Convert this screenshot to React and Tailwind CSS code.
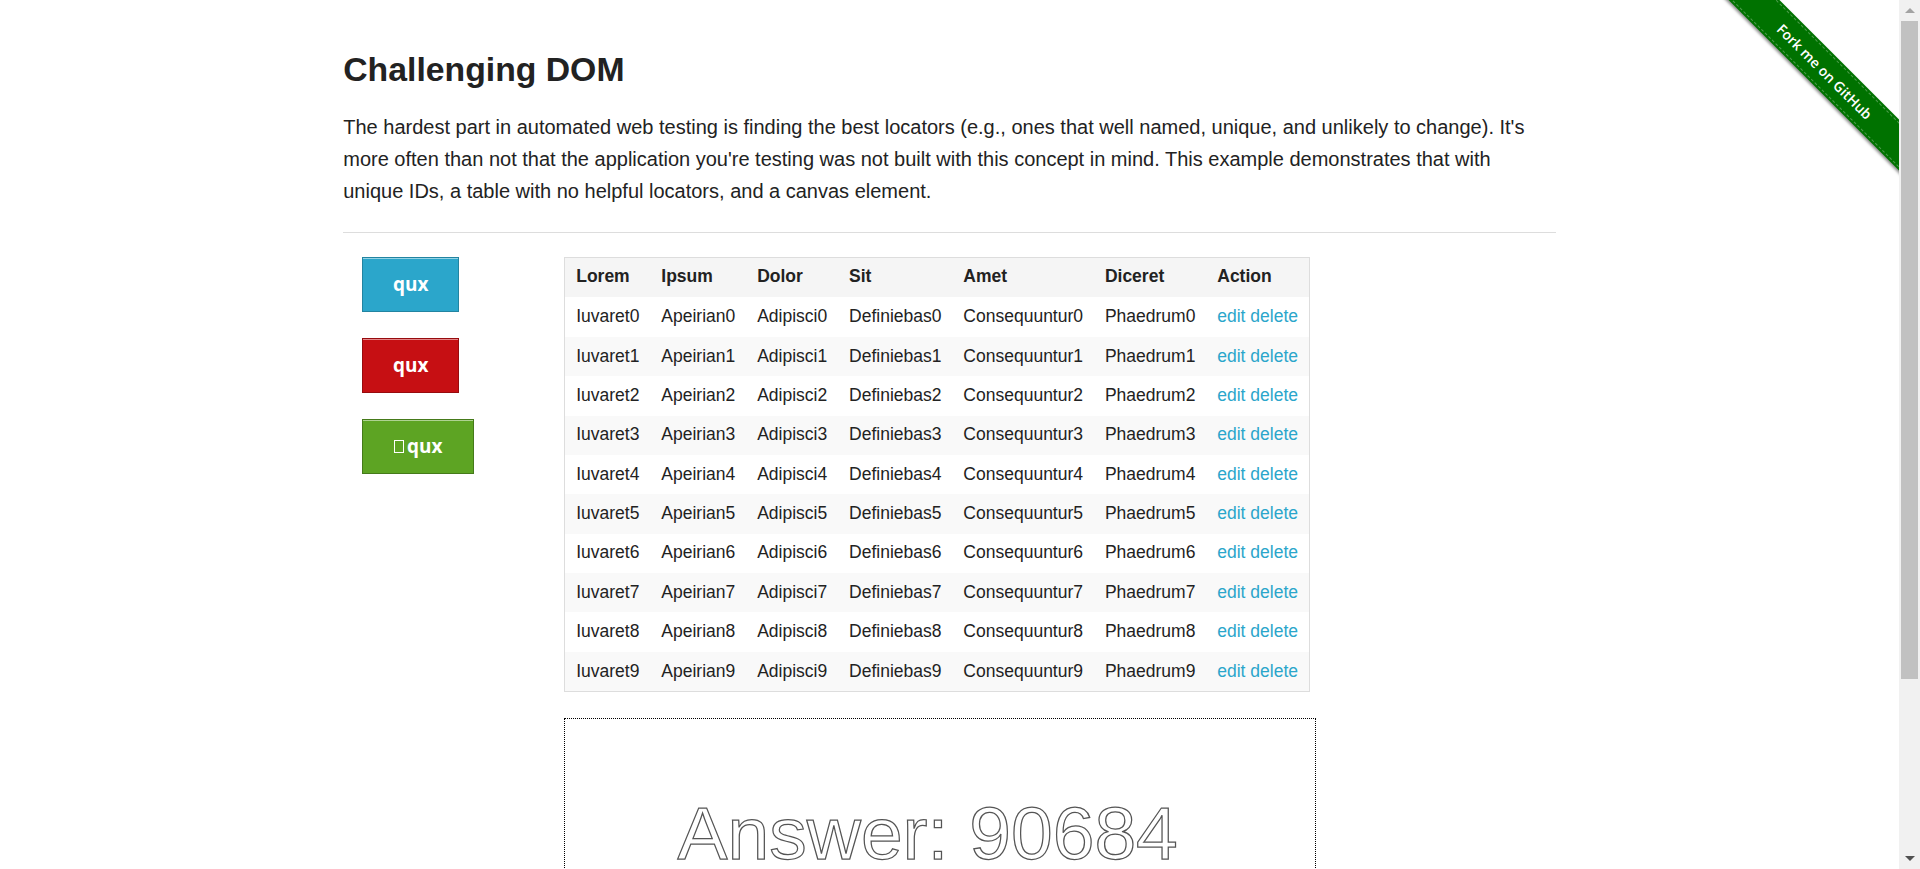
import React from 'react';

const headers = ['Lorem', 'Ipsum', 'Dolor', 'Sit', 'Amet', 'Diceret', 'Action'];
const rows = Array.from({ length: 10 }, (_, i) => [
  `Iuvaret${i}`,
  `Apeirian${i}`,
  `Adipisci${i}`,
  `Definiebas${i}`,
  `Consequuntur${i}`,
  `Phaedrum${i}`,
]);

const ForkRibbon = () => (
  <div className="absolute top-0 right-0 w-[186px] h-[186px] overflow-hidden pointer-events-none">
    <div className="absolute left-[-38px] top-[53px] w-[300px] h-[36px] rotate-45 bg-[#007200] shadow-[0_2px_3px_rgba(0,0,0,0.45)] flex items-center justify-center">
      <div className="absolute inset-x-0 top-[2px] border-t border-dashed border-white/30" />
      <div className="absolute inset-x-0 bottom-[2px] border-t border-dashed border-white/30" />
      <span className="font-['Open_Sans',sans-serif] font-semibold text-[14px] text-white">
        Fork me on GitHub
      </span>
    </div>
  </div>
);

const QuxButton = ({ color, wide, tofu }) => (
  <a
    href="#"
    className={`flex items-center justify-center h-[55px] border font-['Open_Sans',sans-serif] font-bold text-[19px] text-white shadow-[inset_0_1px_0_rgba(255,255,255,0.5)] ${color} ${wide ? 'w-[112px]' : 'w-[97px]'}`}
  >
    {tofu && <span className="inline-block w-[10px] h-[13px] border border-white mr-[3px] mb-[1px]" />}
    qux
  </a>
);

// classic scrollbar the browser would draw at the right edge
const Scrollbar = () => (
  <div className="w-[21px] shrink-0 bg-[#f1f1f1] flex flex-col items-center">
    <div className="h-[21px] flex items-center justify-center">
      <div className="w-0 h-0 border-x-[5px] border-x-transparent border-b-[5px] border-b-[#a3a3a3]" />
    </div>
    <div className="w-[17px] h-[658px] bg-[#c1c1c1]" />
    <div className="flex-1" />
    <div className="h-[21px] flex items-center justify-center">
      <div className="w-0 h-0 border-x-[5px] border-x-transparent border-t-[5px] border-t-[#505050]" />
    </div>
  </div>
);

export default function App() {
  return (
    <div className="flex h-screen overflow-hidden bg-white text-[#222] font-['Liberation_Sans',Arial,sans-serif]">
      <div className="relative flex-1 overflow-hidden">
        <ForkRibbon />

        <div className="mx-auto w-[1250px] px-[18.75px] pt-[49px]">
          <h3 className="text-[33.75px] leading-[40.5px] font-bold">Challenging DOM</h3>
          <p className="mt-[21px] text-[20px] leading-[32px]">
            The hardest part in automated web testing is finding the best locators (e.g., ones that well named, unique, and unlikely to change). It's more often than not that the application you're testing was not built with this concept in mind. This example demonstrates that with unique IDs, a table with no helpful locators, and a canvas element.
          </p>
          <hr className="mt-[25.5px] border-[#ddd]" />

          <div className="flex mt-[24px] pl-[2px]">
            <div className="w-[219px] pl-[17px] flex flex-col gap-[26px]">
              <QuxButton color="bg-[#2ba6cb] border-[#2284a1]" />
              <QuxButton color="bg-[#c60f13] border-[#970b0e]" />
              <QuxButton color="bg-[#5da423] border-[#457a1a]" wide tofu />
            </div>

            <div>
              <table className="border border-[#ddd] bg-white text-[17.5px] leading-[19.6875px]">
                <thead className="bg-[#f5f5f5]">
                  <tr>
                    {headers.map((h) => (
                      <th key={h} className="text-left font-bold pt-[8.75px] pb-[10.9375px] px-[10.9375px]">
                        {h}
                      </th>
                    ))}
                  </tr>
                </thead>
                <tbody>
                  {rows.map((r, i) => (
                    <tr key={i} className={i % 2 === 1 ? 'bg-[#f9f9f9]' : 'bg-white'}>
                      {r.map((c) => (
                        <td key={c} className="py-[9.84375px] px-[10.9375px] whitespace-nowrap">
                          {c}
                        </td>
                      ))}
                      <td className="py-[9.84375px] px-[10.9375px] whitespace-nowrap">
                        <a href="#" className="text-[#2ba6cb]">edit</a>{' '}
                        <a href="#" className="text-[#2ba6cb]">delete</a>
                      </td>
                    </tr>
                  ))}
                </tbody>
              </table>

              <div className="mt-[26px] w-[752px] h-[252px] border border-dotted border-black">
                <svg width="750" height="250" viewBox="0 0 750 250">
                  <text
                    x="112.5"
                    y="140"
                    fontFamily="Liberation Sans, Arial, sans-serif"
                    fontSize="75"
                    fill="none"
                    stroke="#555"
                    strokeWidth="1.25"
                  >
                    Answer: 90684
                  </text>
                </svg>
              </div>
            </div>
          </div>
        </div>

        {/* footer */}
        <div className="mx-auto w-[416px] px-[18.75px] mt-[45px] pb-[40px]">
          <hr className="border-[#ddd]" />
          <div className="mt-[24px] text-center text-[20px] leading-[32px]">
            Powered by <a href="#" className="text-[#2ba6cb]">Elemental Selenium</a>
          </div>
        </div>
      </div>

      <Scrollbar />
    </div>
  );
}
